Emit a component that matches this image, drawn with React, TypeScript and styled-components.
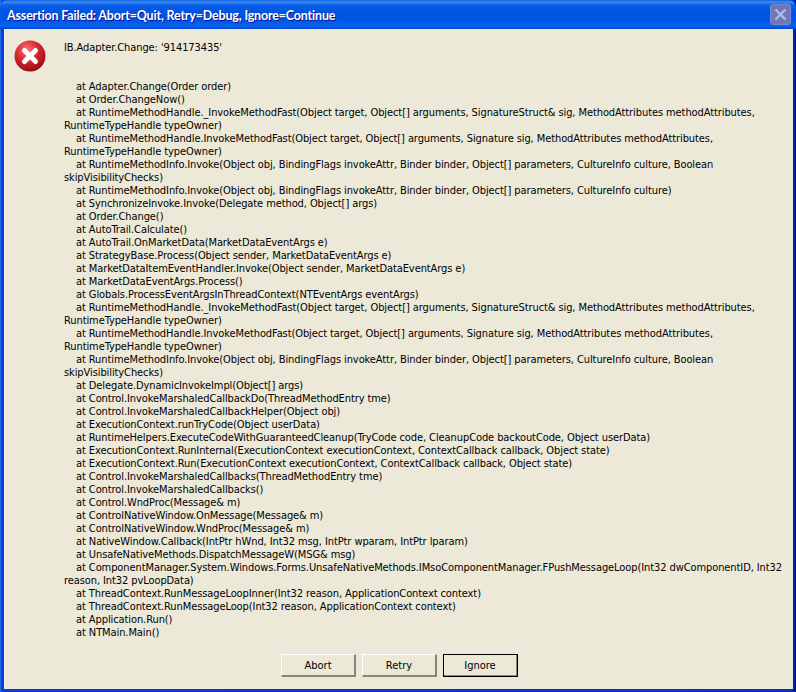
import React from 'react';
import styled, { createGlobalStyle } from 'styled-components';

const frames = [
  'at Adapter.Change(Order order)',
  'at Order.ChangeNow()',
  'at RuntimeMethodHandle._InvokeMethodFast(Object target, Object[] arguments, SignatureStruct& sig, MethodAttributes methodAttributes,\nRuntimeTypeHandle typeOwner)',
  'at RuntimeMethodHandle.InvokeMethodFast(Object target, Object[] arguments, Signature sig, MethodAttributes methodAttributes,\nRuntimeTypeHandle typeOwner)',
  'at RuntimeMethodInfo.Invoke(Object obj, BindingFlags invokeAttr, Binder binder, Object[] parameters, CultureInfo culture, Boolean\nskipVisibilityChecks)',
  'at RuntimeMethodInfo.Invoke(Object obj, BindingFlags invokeAttr, Binder binder, Object[] parameters, CultureInfo culture)',
  'at SynchronizeInvoke.Invoke(Delegate method, Object[] args)',
  'at Order.Change()',
  'at AutoTrail.Calculate()',
  'at AutoTrail.OnMarketData(MarketDataEventArgs e)',
  'at StrategyBase.Process(Object sender, MarketDataEventArgs e)',
  'at MarketDataItemEventHandler.Invoke(Object sender, MarketDataEventArgs e)',
  'at MarketDataEventArgs.Process()',
  'at Globals.ProcessEventArgsInThreadContext(NTEventArgs eventArgs)',
  'at RuntimeMethodHandle._InvokeMethodFast(Object target, Object[] arguments, SignatureStruct& sig, MethodAttributes methodAttributes,\nRuntimeTypeHandle typeOwner)',
  'at RuntimeMethodHandle.InvokeMethodFast(Object target, Object[] arguments, Signature sig, MethodAttributes methodAttributes,\nRuntimeTypeHandle typeOwner)',
  'at RuntimeMethodInfo.Invoke(Object obj, BindingFlags invokeAttr, Binder binder, Object[] parameters, CultureInfo culture, Boolean\nskipVisibilityChecks)',
  'at Delegate.DynamicInvokeImpl(Object[] args)',
  'at Control.InvokeMarshaledCallbackDo(ThreadMethodEntry tme)',
  'at Control.InvokeMarshaledCallbackHelper(Object obj)',
  'at ExecutionContext.runTryCode(Object userData)',
  'at RuntimeHelpers.ExecuteCodeWithGuaranteedCleanup(TryCode code, CleanupCode backoutCode, Object userData)',
  'at ExecutionContext.RunInternal(ExecutionContext executionContext, ContextCallback callback, Object state)',
  'at ExecutionContext.Run(ExecutionContext executionContext, ContextCallback callback, Object state)',
  'at Control.InvokeMarshaledCallbacks(ThreadMethodEntry tme)',
  'at Control.InvokeMarshaledCallbacks()',
  'at Control.WndProc(Message& m)',
  'at ControlNativeWindow.OnMessage(Message& m)',
  'at ControlNativeWindow.WndProc(Message& m)',
  'at NativeWindow.Callback(IntPtr hWnd, Int32 msg, IntPtr wparam, IntPtr lparam)',
  'at UnsafeNativeMethods.DispatchMessageW(MSG& msg)',
  'at ComponentManager.System.Windows.Forms.UnsafeNativeMethods.IMsoComponentManager.FPushMessageLoop(Int32 dwComponentID, Int32\nreason, Int32 pvLoopData)',
  'at ThreadContext.RunMessageLoopInner(Int32 reason, ApplicationContext context)',
  'at ThreadContext.RunMessageLoop(Int32 reason, ApplicationContext context)',
  'at Application.Run()',
  'at NTMain.Main()',
];

const ErrorIcon = () => (
  <svg width="32" height="32" viewBox="0 0 32 32">
    <defs>
      <radialGradient id="errFill" cx="40%" cy="30%" r="75%">
        <stop offset="0" stopColor="#f2787c" />
        <stop offset="0.45" stopColor="#dc2a32" />
        <stop offset="1" stopColor="#8e0a10" />
      </radialGradient>
    </defs>
    <circle cx="16" cy="16" r="15.5" fill="url(#errFill)" />
    <path d="M10.5 10.5 L21.5 21.5 M21.5 10.5 L10.5 21.5" stroke="#fff" strokeWidth="5" strokeLinecap="round" />
  </svg>
);

const App: React.FC = () => {
  return (
    <>
      <GlobalStyle />
      <Window>
        <TitleBar>
          <Title>Assertion Failed: Abort=Quit, Retry=Debug, Ignore=Continue</Title>
          <CloseButton>
            <svg width="19" height="19" viewBox="0 0 19 19">
              <path d="M4.5 4.5 L14.5 14.5 M14.5 4.5 L4.5 14.5" stroke="#b4b9de" strokeWidth="2.4" />
            </svg>
          </CloseButton>
        </TitleBar>
        <Body>
          <Content>
            <IconColumn>
              <ErrorIcon />
            </IconColumn>
            <Message>
              <Headline>IB.Adapter.Change: '914173435'</Headline>
              {frames.map((frame, i) => (
                <Frame key={i}>{frame}</Frame>
              ))}
            </Message>
          </Content>
          <ButtonRow>
            <DialogButton>Abort</DialogButton>
            <DialogButton>Retry</DialogButton>
            <DialogButton $isDefault>Ignore</DialogButton>
          </ButtonRow>
        </Body>
      </Window>
    </>
  );
};

const GlobalStyle = createGlobalStyle`
  html, body {
    margin: 0;
    padding: 0;
    background: #0831d9;
  }
`;

const Window = styled.div`
  width: 796px;
  height: 692px;
  display: flex;
  flex-direction: column;
  overflow: hidden;
  background: linear-gradient(to right, #2468ee 0, #2468ee 1px, #0a45e0 1px, #0a3cd8 4px, #0a2fc8 792px, #00138c 796px);
`;

const TitleBar = styled.div`
  height: 29px;
  flex: none;
  display: flex;
  align-items: center;
  justify-content: space-between;
  padding: 0 5px 0 7px;
  border-radius: 7px 7px 0 0;
  background: linear-gradient(
    to bottom,
    #0a5fe0 0,
    #3f8cf3 2px,
    #0a60e8 5px,
    #0054e3 12px,
    #0055e5 20px,
    #0a62f0 26px,
    #0044c8 29px
  );
`;

const Title = styled.div`
  font-family: 'Lato', 'Liberation Sans', sans-serif;
  font-size: 12.5px;
  font-weight: 700;
  letter-spacing: -0.18px;
  color: #fff;
  text-shadow: 1px 1px 0 #0f1089;
  white-space: nowrap;
  padding-top: 2px;
`;

const CloseButton = styled.div`
  width: 21px;
  height: 21px;
  display: flex;
  border-radius: 3px;
  border: 1px solid #7c86c8;
  box-sizing: border-box;
  align-items: center;
  justify-content: center;
  background: #6d78bb;
  svg {
    flex: none;
  }
`;

const Body = styled.div`
  flex: 1;
  margin: 0 3px 3px 4px;
  display: flex;
  flex-direction: column;
  background: #ece9d8;
  border-left: 1px solid #f6f4ea;
  border-right: 1px solid #e6e6d6;
`;

const Content = styled.div`
  flex: 1;
  display: flex;
  padding: 11px 0 0 9px;
`;

const IconColumn = styled.div`
  width: 50px;
  flex: none;
`;

const Message = styled.div`
  font-family: 'DejaVu Sans', 'Liberation Sans', sans-serif;
  font-stretch: condensed;
  font-size: 11px;
  letter-spacing: -0.09px;
  line-height: 13px;
  color: #000;
  white-space: pre;
  padding-top: 1px;
`;

const Headline = styled.div`
  height: 39px;
`;

const Frame = styled.div`
  &::before {
    content: '';
    display: inline-block;
    width: 12px;
  }
`;

const ButtonRow = styled.div`
  flex: none;
  display: flex;
  justify-content: center;
  gap: 6px;
  padding: 0 0 12px 2px;
`;

const DialogButton = styled.div<{ $isDefault?: boolean }>`
  width: 75px;
  height: 23px;
  box-sizing: border-box;
  display: flex;
  align-items: center;
  justify-content: center;
  font-family: 'DejaVu Sans', 'Liberation Sans', sans-serif;
  font-stretch: condensed;
  font-size: 11px;
  color: #000;
  background: #ece9d8;
  border-style: solid;
  border-width: 1px 2px 2px 1px;
  border-color: #fff #8b8672 #8b8672 #fff;
  ${(p) =>
    p.$isDefault &&
    `
    outline: 1px solid #000;
    outline-offset: -1px;
  `}
`;

export default App;
